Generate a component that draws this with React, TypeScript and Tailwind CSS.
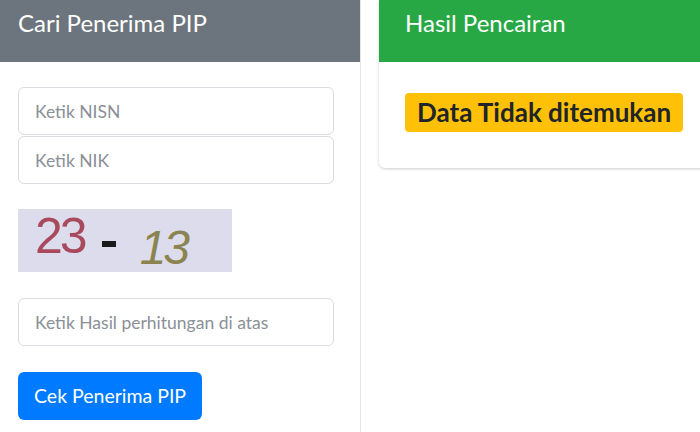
import React from 'react';

const FONT = { fontFamily: '"Lato", "Noto Sans", sans-serif' };

function Field({ placeholder }: { placeholder: string }) {
  return (
    <input
      placeholder={placeholder}
      className="block h-[48px] w-full rounded-md border border-[#d9dde2] bg-white px-[16px] text-[17.5px] text-[#495057] outline-none placeholder:text-[#8a9097]"
    />
  );
}

function Captcha() {
  return (
    <div className="flex h-[63px] w-[214px] items-center bg-[#dcdcec] pl-[17px] font-['Liberation_Sans',sans-serif]">
      <span className="-mt-[10px] text-[50px] leading-none tracking-[-3px] text-[#a84a5c]">23</span>
      <span className="ml-[17px] mt-[6px] h-[6px] w-[14px] bg-[#1a1a1a]" />
      <span className="ml-[24px] mt-[14px] text-[48px] italic leading-none tracking-[-3px] text-[#8c8450]">13</span>
    </div>
  );
}

export default function App() {
  return (
    <div className="flex h-[432px] w-[700px] overflow-hidden bg-white" style={FONT}>
      <section className="flex w-[361px] shrink-0 flex-col border-r border-[#e3e6ea]">
        <div className="flex h-[62px] items-start bg-[#6c757d] px-[18px] pt-[5px] text-[24px] text-white">
          Cari Penerima PIP
        </div>
        <div className="flex flex-col px-[18px] pt-[25px] pr-[26px]">
          <div className="flex flex-col gap-[1px]">
            <Field placeholder="Ketik NISN" />
            <Field placeholder="Ketik NIK" />
          </div>
          <div className="mt-[25px]">
            <Captcha />
          </div>
          <div className="mt-[26px]">
            <Field placeholder="Ketik Hasil perhitungan di atas" />
          </div>
          <div className="mt-[26px]">
            <button className="h-[48px] rounded-md bg-[#007bff] px-[16px] text-[19.5px] text-white">
              Cek Penerima PIP
            </button>
          </div>
        </div>
      </section>
      <div className="flex-1 pl-[18px]">
        <section className="w-[360px] overflow-hidden rounded-b-md bg-white shadow-[0_1px_3px_rgba(0,0,0,0.2)]">
          <div className="flex h-[62px] items-start bg-[#28a745] px-[26px] pt-[5px] text-[24px] text-white">
            Hasil Pencairan
          </div>
          <div className="h-[106px] px-[26px] pt-[31px]">
            <span className="inline-block rounded-[4px] bg-[#ffc107] px-[12px] py-[2px] text-[26px] font-bold leading-[35px] text-[#212529]">
              Data Tidak ditemukan
            </span>
          </div>
        </section>
      </div>
    </div>
  );
}
